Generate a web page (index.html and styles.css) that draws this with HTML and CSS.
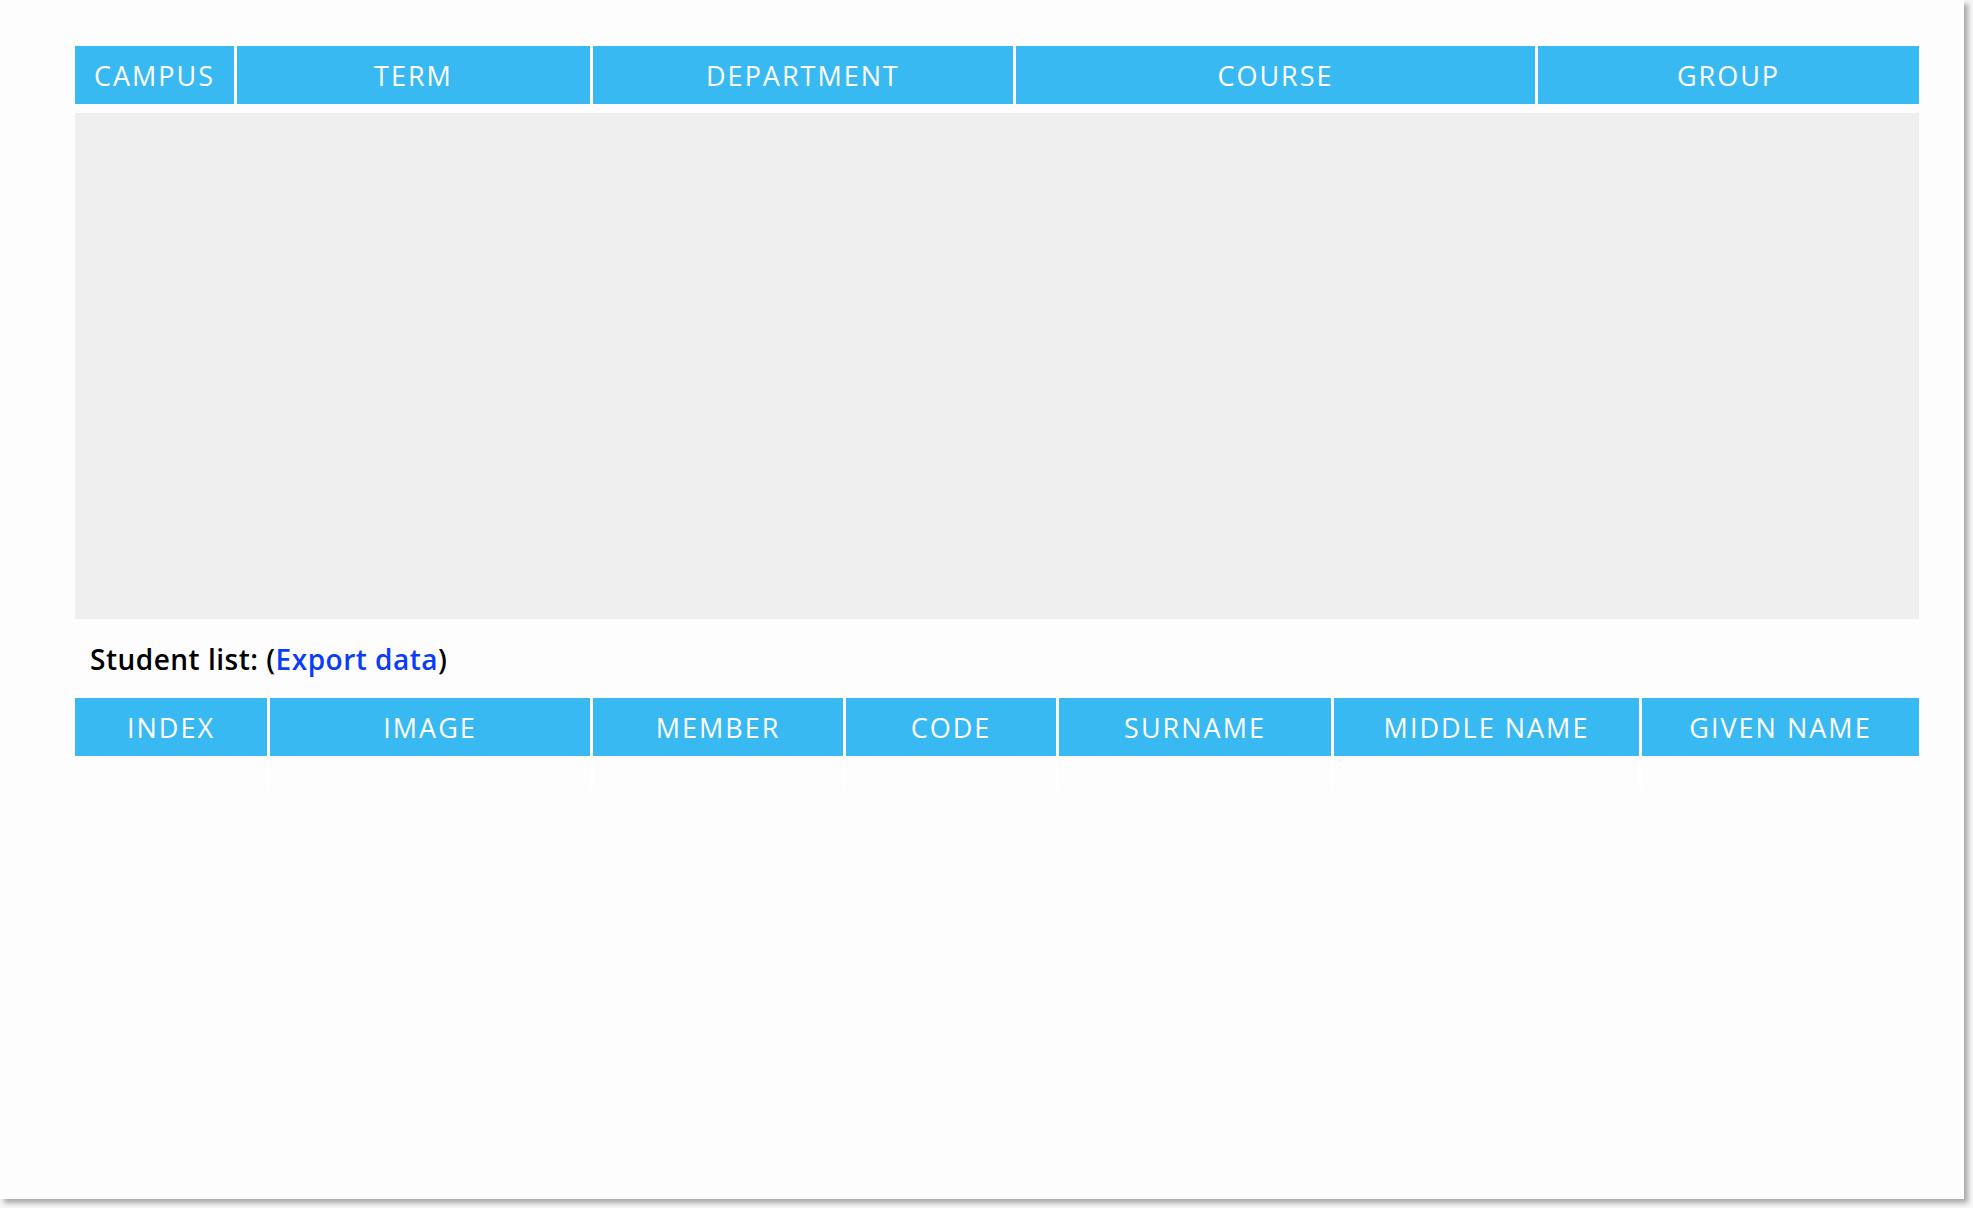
FILE: index.html
```html
<!DOCTYPE html>
<html lang="en">
<head>
<meta charset="utf-8">
<title>Student list</title>
<link rel="stylesheet" href="styles.css">
</head>
<body>
<div class="page">
  <div class="filters">
    <div class="grid grid-top">
      <div class="hcell">CAMPUS</div>
      <div class="hcell">TERM</div>
      <div class="hcell">DEPARTMENT</div>
      <div class="hcell">COURSE</div>
      <div class="hcell">GROUP</div>
    </div>
    <div class="panel"></div>
  </div>
  <div class="caption">Student list: (<a class="export" href="#">Export data</a>)</div>
  <div class="students">
    <div class="grid grid-bottom">
      <div class="hcell">INDEX</div>
      <div class="hcell">IMAGE</div>
      <div class="hcell">MEMBER</div>
      <div class="hcell">CODE</div>
      <div class="hcell">SURNAME</div>
      <div class="hcell">MIDDLE NAME</div>
      <div class="hcell">GIVEN NAME</div>
    </div>
    <div class="grid grid-bottom body-row">
      <div class="bcell"></div>
      <div class="bcell"></div>
      <div class="bcell"></div>
      <div class="bcell"></div>
      <div class="bcell"></div>
      <div class="bcell"></div>
      <div class="bcell"></div>
    </div>
  </div>
</div>
</body>
</html>
```
FILE: styles.css
```css
html, body {
  margin: 0;
  padding: 0;
  background: #f7f7f7;
}
body {
  width: 1973px;
  height: 1208px;
  overflow: hidden;
  font-family: "Open Sans", "Liberation Sans", sans-serif;
}
.page {
  box-sizing: border-box;
  width: 1964px;
  height: 1199px;
  background: #fdfdfd;
  box-shadow: 4px 4px 5px rgba(0, 0, 0, 0.32);
  padding: 46px 45px 0 75px;
}
.grid {
  display: grid;
  column-gap: 3px;
  background: #ffffff;
}
.grid-top {
  grid-template-columns: 159px 353px 420px 519px 1fr;
}
.grid-bottom {
  grid-template-columns: 192px 320px 250px 210px 272px 305px 1fr;
}
.hcell {
  background: #39b9f1;
  color: #ffffff;
  height: 58px;
  display: flex;
  align-items: center;
  justify-content: center;
  font-size: 27px;
  font-weight: 500;
  letter-spacing: 2px;
}
.panel {
  margin-top: 9px;
  height: 506px;
  background: #efefef;
}
.caption {
  height: 79px;
  display: flex;
  align-items: center;
  padding-left: 15px;
  font-size: 28px;
  color: #000000;
  font-weight: 600;
  letter-spacing: 0.5px;
}
.export {
  color: #0b3cf8;
  text-decoration: none;
}
.body-row .bcell {
  height: 33px;
  background: #fdfdfd;
}
```
